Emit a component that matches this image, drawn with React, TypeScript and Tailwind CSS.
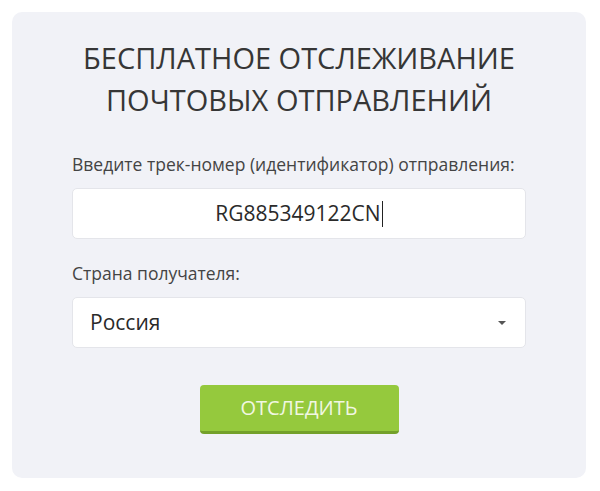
import React from 'react';

const App: React.FC = () => {
  return (
    <div className="min-h-[491px] w-[600px] bg-white p-3 font-['Open_Sans',sans-serif]">
      <div className="flex h-[466px] w-[574px] flex-col items-center rounded-[10px] bg-[#f1f2f7] px-[60px] pt-[25px]">
        <h1 className="text-center text-[29px] leading-[42px] font-normal text-[#363636]">
          БЕСПЛАТНОЕ ОТСЛЕЖИВАНИЕ
          <br />
          ПОЧТОВЫХ ОТПРАВЛЕНИЙ
        </h1>

        <label className="mt-[31px] w-full whitespace-nowrap text-[17.5px] leading-[24px] text-[#444]">
          Введите трек-номер (идентификатор) отправления:
        </label>
        <div className="mt-[12px] flex h-[51px] w-full items-center justify-center rounded-[5px] border border-[#e4e5ea] bg-white text-[21px] text-[#2a2a2a]">
          <span>RG885349122CN</span>
          <span className="ml-px h-[26px] w-px bg-[#222]"></span>
        </div>

        <label className="mt-[22px] w-full whitespace-nowrap text-[17.5px] leading-[24px] text-[#444]">
          Страна получателя:
        </label>
        <div className="mt-[12px] flex h-[51px] w-full items-center justify-between rounded-[5px] border border-[#e4e5ea] bg-white pr-[19px] pl-[17px] text-[21px] text-[#2a2a2a]">
          <span>Россия</span>
          <span className="h-0 w-0 border-x-[4px] border-t-[4px] border-x-transparent border-t-[#555]"></span>
        </div>

        <button className="mt-[37px] flex h-[49px] w-[199px] items-center justify-center rounded-[4px] border-b-[3px] border-[#73a02a] bg-[#95c93d] text-[20px] text-[#f1f7e2]">
          ОТСЛЕДИТЬ
        </button>
      </div>
    </div>
  );
};

export default App;
